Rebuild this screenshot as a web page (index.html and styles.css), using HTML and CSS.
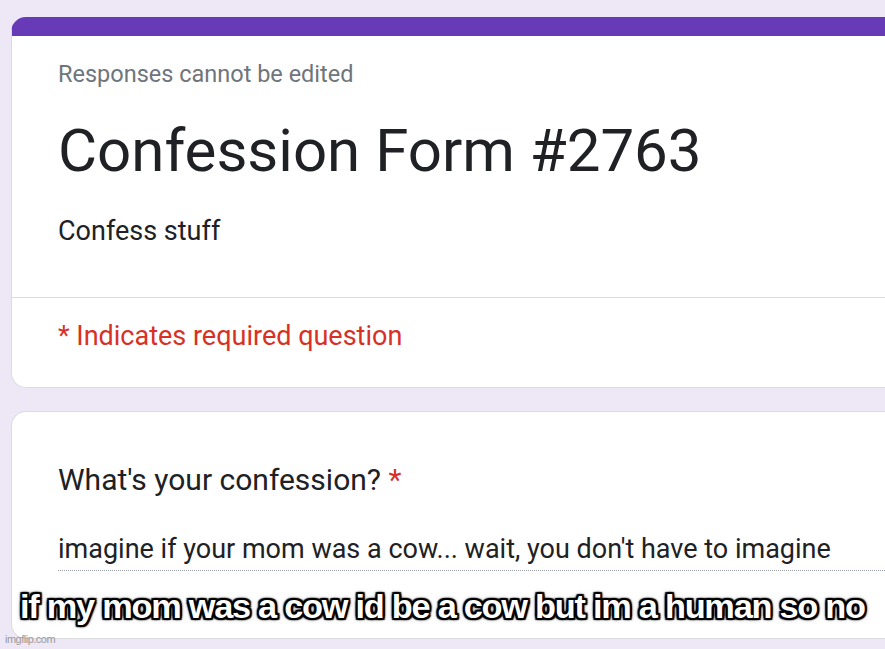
FILE: index.html
```html
<!DOCTYPE html>
<html lang="en">
<head>
    <meta charset="UTF-8">
    <meta name="viewport" content="width=device-width, initial-scale=1.0">
    <title>Confession Form #2763</title>
    <link rel="stylesheet" href="styles.css">
</head>
<body>
    <main class="form">
        <section class="card header-card">
            <div class="card-top">
                <p class="notice">Responses cannot be edited</p>
                <h1>Confession Form #2763</h1>
                <p class="description">Confess stuff</p>
            </div>
            <div class="card-bottom">
                <p class="required">* Indicates required question</p>
            </div>
        </section>

        <section class="card question-card">
            <h2>What's your confession? <span class="star">*</span></h2>
            <div class="answer">imagine if your mom was a cow... wait, you don't have to imagine</div>
        </section>
    </main>

    <div class="caption">if my mom was a cow id be a cow but im a human so no</div>
    <div class="watermark">imgflip.com</div>
</body>
</html>
```

FILE: styles.css
```css
body {
    margin: 0;
    padding: 0;
    background-color: #ede7f6;
    font-family: Roboto, "Noto Sans", Arial, sans-serif;
    overflow: hidden;
    height: 649px;
    position: relative;
}

.form {
    padding-top: 17px;
    margin-left: 11px;
    width: 874px;
}

.card {
    background: white;
    border: 1px solid #dadce0;
    border-right: none;
    border-radius: 15px 0 0 15px;
    overflow: hidden;
}

.header-card {
    border-top: 19px solid #673ab7;
    border-top-left-radius: 15px;
}

.card-top {
    padding: 24px 46px 50px;
    border-bottom: 1px solid #dadce0;
}

.notice {
    margin: 0;
    font-size: 23.5px;
    line-height: 28px;
    color: #70757a;
}

.header-card h1 {
    margin: 27px 0 0;
    font-size: 60px;
    font-weight: 400;
    line-height: 72px;
    color: #202124;
}

.description {
    margin: 28px 0 0;
    font-size: 27px;
    line-height: 32px;
    color: #202124;
}

.card-bottom {
    padding: 22px 46px 35px;
}

.required {
    margin: 0;
    font-size: 27px;
    line-height: 32px;
    color: #d93025;
}

.question-card {
    margin-top: 23px;
    padding: 50px 0 67px 46px;
}

.question-card h2 {
    margin: 0;
    font-size: 30px;
    font-weight: 400;
    line-height: 36px;
    color: #202124;
}

.star {
    color: #d93025;
}

.answer {
    margin-top: 35px;
    font-size: 27px;
    line-height: 32px;
    color: #202124;
    padding-bottom: 5px;
    border-bottom: 1px dotted #9aa0a6;
}

.caption {
    position: absolute;
    left: 20px;
    top: 590px;
    font-family: "Liberation Sans", Arial, sans-serif;
    font-weight: bold;
    font-size: 33px;
    line-height: 33px;
    letter-spacing: -1.2px;
    color: white;
    white-space: nowrap;
    transform: scaleX(1.04);
    transform-origin: left top;
    text-shadow:
        2px 0 1px #000, -2px 0 1px #000, 0 2px 1px #000, 0 -2px 1px #000,
        2px 2px 1px #000, -2px -2px 1px #000, 2px -2px 1px #000, -2px 2px 1px #000,
        0 0 5px #000;
}

.watermark {
    position: absolute;
    left: 5px;
    top: 633px;
    font-family: "Liberation Sans", Arial, sans-serif;
    font-size: 11px;
    color: #9a9a9a;
    letter-spacing: -0.5px;
}
```
